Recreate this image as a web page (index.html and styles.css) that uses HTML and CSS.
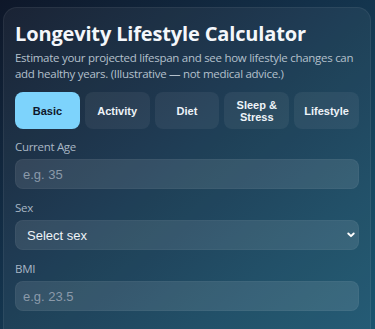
FILE: index.html
```html
<!DOCTYPE html>
<html lang="en">
<head>
<meta charset="utf-8">
<title>Longevity Lifestyle Calculator</title>
<link rel="stylesheet" href="styles.css">
</head>
<body>
<main class="card">
  <h1 class="title">Longevity Lifestyle Calculator</h1>
  <p class="subtitle">Estimate your projected lifespan and see how lifestyle changes can add healthy years. (Illustrative — not medical advice.)</p>
  <nav class="tabs">
    <button class="tab active">Basic</button>
    <button class="tab">Activity</button>
    <button class="tab">Diet</button>
    <button class="tab">Sleep &amp;<br>Stress</button>
    <button class="tab">Lifestyle</button>
  </nav>
  <div class="field first">
    <label class="label" for="age">Current Age</label>
    <input class="input" id="age" type="text" placeholder="e.g. 35">
  </div>
  <div class="field">
    <label class="label" for="sex">Sex</label>
    <div class="select-wrap">
      <select class="input select" id="sex">
        <option>Select sex</option>
        <option>Male</option>
        <option>Female</option>
      </select>
      <svg class="chevron" width="8" height="6" viewBox="0 0 8 6"><path d="M1.3 1.5 L4 4.2 L6.7 1.5" fill="none" stroke="#ffffff" stroke-width="1.9" stroke-linecap="round" stroke-linejoin="round"/></svg>
    </div>
  </div>
  <div class="field">
    <label class="label" for="bmi">BMI</label>
    <input class="input" id="bmi" type="text" placeholder="e.g. 23.5">
  </div>
</main>
</body>
</html>
```
FILE: styles.css
```css
* { box-sizing: border-box; }
html, body { margin: 0; padding: 0; }
body {
  min-height: 100vh;
  background: linear-gradient(140deg, #0e1729 0%, #133049 40%, #174760 75%, #1a5570 100%);
  font-family: "Open Sans", "Liberation Sans", sans-serif;
  color: #eef3f8;
  padding: 7px 4px 0 3px;
}
.card {
  background: rgba(255, 255, 255, 0.05);
  border: 1px solid rgba(255, 255, 255, 0.06);
  border-radius: 14px;
  padding: 14px 11px 30px;
}
.title {
  margin: 0;
  font-size: 20px;
  line-height: 24px;
  font-weight: 700;
  color: #f4f7fb;
  letter-spacing: -0.15px;
}
.subtitle {
  margin: 3.5px 0 0;
  font-size: 11.5px;
  line-height: 16px;
  color: #b4c0cc;
  letter-spacing: -0.28px;
}
.tabs {
  display: grid;
  grid-template-columns: repeat(5, 1fr);
  gap: 5px;
  margin-top: 10.5px;
}
.tab {
  font-family: "Liberation Sans", Arial, sans-serif;
  font-weight: 700;
  font-size: 11px;
  line-height: 12px;
  padding: 6.5px 2px;
  border: none;
  border-radius: 8px;
  background: rgba(255, 255, 255, 0.06);
  color: #eef3f8;
}
.tab.active {
  background: #7dd3fc;
  color: #0f172a;
}
.field {
  display: flex;
  flex-direction: column;
  gap: 4px;
  margin-top: 11px;
}
.field.first { margin-top: 10px; }
.label {
  font-size: 11.5px;
  line-height: 16px;
  color: #a9b7c5;
  letter-spacing: -0.3px;
}
.input {
  width: 100%;
  height: 30px;
  border: 1px solid rgba(255, 255, 255, 0.04);
  border-radius: 8px;
  background: rgba(255, 255, 255, 0.1);
  font-family: "Liberation Sans", Arial, sans-serif;
  font-size: 13px;
  color: #eef3f8;
  padding: 0 7px;
  outline: none;
}
.input::placeholder { color: #8b9aaa; }
.select-wrap { position: relative; }
.select {
  appearance: none;
  -webkit-appearance: none;
  padding-left: 11px;
}
.chevron {
  position: absolute;
  right: 4px;
  top: 12px;
  pointer-events: none;
}
```
